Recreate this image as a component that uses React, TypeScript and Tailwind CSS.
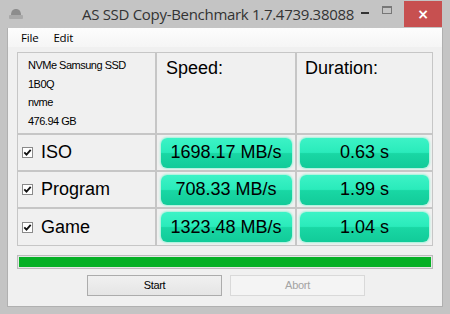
import React from "react";

const rows = [
  { name: "ISO", speed: "1698.17 MB/s", time: "0.63 s" },
  { name: "Program", speed: "708.33 MB/s", time: "1.99 s" },
  { name: "Game", speed: "1323.48 MB/s", time: "1.04 s" },
];

const sans = "font-['Liberation_Sans',Arial,sans-serif]";

function CheckBox() {
  return (
    <svg width="11" height="11" viewBox="0 0 11 11" className="shrink-0">
      <rect x="0.5" y="0.5" width="10" height="10" fill="#fff" stroke="#8a8a8a" />
      <path d="M2.3 5.3 L4.5 7.6 L8.7 2.8" fill="none" stroke="#111" strokeWidth="1.8" />
    </svg>
  );
}

function GreenBox({ text, w }: { text: string; w: string }) {
  return (
    <div
      className={`${w} h-[30px] rounded-[6px] flex items-center justify-center text-[18px] text-black bg-[linear-gradient(to_bottom,#3cf3c6_0%,#2aebbb_48%,#19d7a4_52%,#12cb99_100%)] shadow-[0_0_2px_1px_#9ff3da]`}
    >
      {text}
    </div>
  );
}

export default function App() {
  return (
    <div className="w-[450px] h-[314px] bg-[#c4c4c4] flex flex-col select-none overflow-hidden">
      {/* title bar */}
      <div className="h-[28px] shrink-0 grid grid-cols-[1fr_auto_1fr] items-center">
        <div className="pl-[8px] flex items-center">
          <svg width="16" height="12" viewBox="0 0 16 12">
            <path d="M3 7 C3 3 5 1 8 1 C11 1 13 3 13 7 Z" fill="#8d8d8d" />
            <rect x="1" y="7" width="14" height="4" rx="1" fill="#a9a9a9" />
          </svg>
        </div>
        <div className="text-[15px] text-[#333] font-['Open_Sans',sans-serif] tracking-[-0.3px]">
          AS SSD Copy-Benchmark 1.7.4739.38088
        </div>
        <div className="flex items-start justify-end h-full">
          <div className="w-[22px] h-[26px] flex items-center justify-center">
            <div className="w-[8px] h-[2px] bg-[#333]" />
          </div>
          <div className="w-[22px] h-[26px] flex items-center justify-center">
            <div className="w-[10px] h-[8px] border border-[#777] border-t-2 -mt-[6px]" />
          </div>
          <div className="w-[38px] h-[26px] mt-[1px] mr-[8px] ml-[6px] bg-[#c75050] flex items-center justify-center text-white text-[14px] font-bold font-['DejaVu_Sans',sans-serif]">
            ×
          </div>
        </div>
      </div>

      {/* client area */}
      <div className="mx-[7px] flex-1 mb-[7px] bg-[#f0f0f0] flex flex-col border border-t-0 border-[#b0b0b0]">
        <div className="h-[19px] shrink-0 bg-[linear-gradient(to_bottom,#fdfdfd,#f5f5f5)] flex items-center gap-[15px] pl-[13px] text-[11.5px] text-black font-['Open_Sans',sans-serif] tracking-[-0.2px]">
          <span>File</span>
          <span>Edit</span>
        </div>

        <div className={`px-[9px] pt-[5px] ${sans}`}>
          <div className="grid grid-cols-[137px_138px_135px] grid-rows-[80px_35px_35px_36px] gap-[2px] p-[1px] bg-[#c6c6c6]">
            <div className="bg-[#f0f0f0] pl-[10px] pt-[3px] text-[11px] leading-[18.7px] tracking-[-0.5px] text-black">
              <div>NVMe Samsung SSD</div>
              <div>1B0Q</div>
              <div>nvme</div>
              <div>476.94 GB</div>
            </div>
            <div className="bg-[#f0f0f0] pl-[9px] pt-[2px] text-[18px] text-black">Speed:</div>
            <div className="bg-[#f0f0f0] pl-[8px] pt-[2px] text-[18px] text-black">Duration:</div>
            {rows.map((r) => (
              <React.Fragment key={r.name}>
                <div className="bg-[#f0f0f0] flex items-center pl-[4px] gap-[8px] text-[18px] text-black">
                  <CheckBox />
                  <span>{r.name}</span>
                </div>
                <div className="bg-[#f0f0f0] flex items-center justify-center">
                  <GreenBox text={r.speed} w="w-[131px]" />
                </div>
                <div className="bg-[#f0f0f0] flex items-center justify-center">
                  <GreenBox text={r.time} w="w-[129px]" />
                </div>
              </React.Fragment>
            ))}
          </div>

          <div className="mt-[9px] h-[14px] border border-[#bcbcbc] bg-[#e6e6e6] p-[1px]">
            <div className="h-full w-full bg-[#06b025]" />
          </div>

          <div className="mt-[6px] flex justify-center gap-[8px] pl-[2px] text-[11px] tracking-[-0.3px]">
            <div className="w-[135px] h-[21px] border border-[#acacac] bg-[linear-gradient(to_bottom,#f0f0f0,#e5e5e5)] flex items-center justify-center text-black">
              Start
            </div>
            <div className="w-[135px] h-[21px] border border-[#d9d9d9] bg-[#f4f4f4] flex items-center justify-center text-[#a3a3a3]">
              Abort
            </div>
          </div>
        </div>
      </div>
    </div>
  );
}
